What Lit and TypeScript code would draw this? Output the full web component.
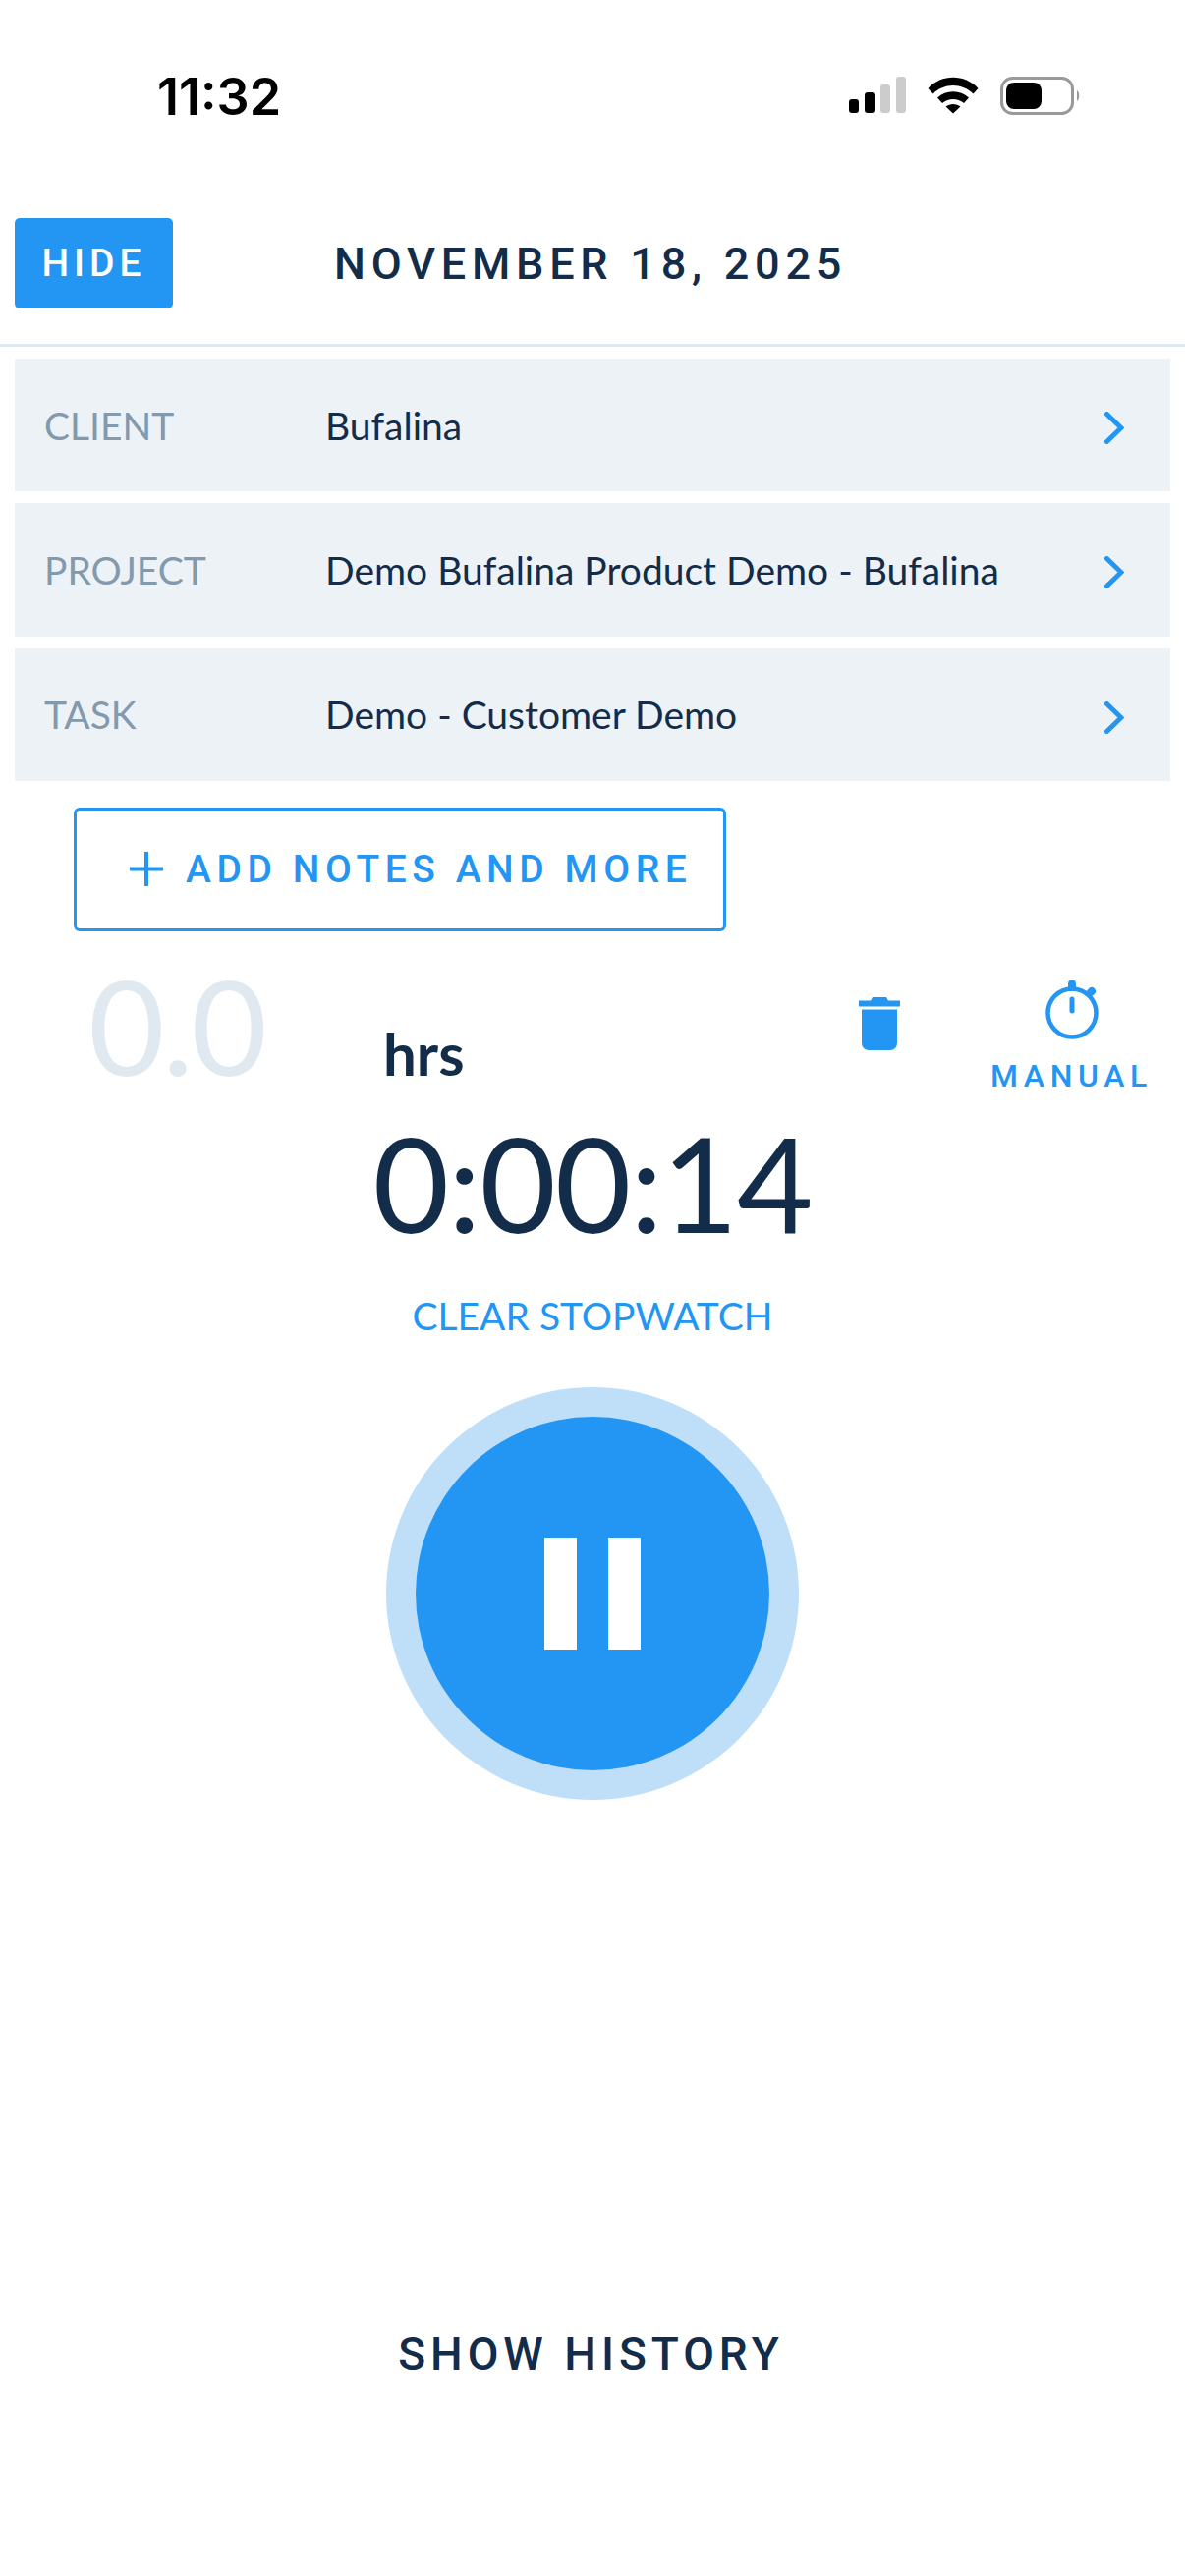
import { LitElement, html, css, svg } from "lit";
import { customElement } from "lit/decorators.js";

const rows = [
  ["CLIENT", "Bufalina"],
  ["PROJECT", "Demo Bufalina Product Demo - Bufalina"],
  ["TASK", "Demo - Customer Demo"],
];

@customElement("app-root")
export class AppRoot extends LitElement {
  static styles = css`
    :host { display: block; width: 1206px; height: 2622px; background: #fff; overflow: hidden; font-family: Lato, sans-serif; color: #132c4a; }
    .status { height: 222px; box-sizing: border-box; padding: 72px 106px 0 160px; display: flex; justify-content: space-between; align-items: flex-start; }
    .time { font: 600 52px/54px Inter, sans-serif; color: #000; letter-spacing: 0; }
    .sysicons { display: flex; align-items: flex-start; gap: 22px; padding-top: 6px; }
    .sysicons svg { display: block; }
    .head { height: 128px; border-bottom: 3px solid #e0e9f1; position: relative; }
    .hide { position: absolute; left: 15px; top: 0; width: 161px; height: 92px; background: #2396f3; border-radius: 5px; color: #fff; font: 500 39px/92px Roboto, sans-serif; letter-spacing: 5px; text-align: center; }
    .date { position: absolute; left: 340px; top: 24px; font: 500 45px/46px Roboto, sans-serif; letter-spacing: 5.75px; white-space: nowrap; }
    .rows { padding: 12px 15px 0; display: flex; flex-direction: column; gap: 12px; }
    .row { height: 135.3px; background: #edf2f6; display: flex; align-items: center; }
    .label { width: 316px; padding-left: 30px; box-sizing: border-box; font-size: 39px; color: #8299ae; }
    .value { flex: 1; font-size: 39px; color: #132c4a; }
    .chev { margin: 6px 47px 0 0; display: block; }
    .add { margin: 27px 0 0 75px; width: 664px; height: 126px; box-sizing: border-box; border: 3px solid #2396f3; border-radius: 6px; display: flex; align-items: center; padding-left: 54px; gap: 23px; color: #2396f3; font: 500 39px Roboto, sans-serif; letter-spacing: 5.55px; white-space: nowrap; }
    .add svg { display: block; flex: none; }
    .hours { height: 170px; position: relative; }
    .big { position: absolute; left: 90px; top: 16px; font-size: 134px; line-height: 160px; color: #e0e8f0; letter-spacing: -2.5px; }
    .hrs { position: absolute; left: 390px; top: 88px; font-size: 60px; line-height: 72px; font-weight: 700; }
    .trash { position: absolute; left: 874px; top: 67px; display: block; }
    .watch { position: absolute; left: 1064px; top: 50px; display: block; }
    .manual { position: absolute; left: 1008px; top: 127px; font: 500 32px/40px Roboto, sans-serif; letter-spacing: 5.6px; color: #2396f3; }
    .timer { text-align: center; font-size: 134px; line-height: 170px; margin-top: 1px; letter-spacing: -1.2px; }
    .clear { text-align: center; font-size: 39px; line-height: 50px; color: #2396f3; margin-top: 25.5px; }
    .play { margin: 47.5px auto 0; width: 420px; height: 420px; border-radius: 50%; background: #bfdff9; display: flex; align-items: center; justify-content: center; }
    .inner { width: 360px; height: 360px; border-radius: 50%; background: #2396f3; display: flex; align-items: center; justify-content: center; gap: 32px; }
    .bar { width: 33px; height: 114px; background: #fff; }
    .history { margin-top: 539px; padding-right: 3px; text-align: center; font: 500 46px/50px Roboto, sans-serif; letter-spacing: 5px; white-space: nowrap; }
  `;

  chevron() {
    return html`<svg class="chev" width="20" height="33" viewBox="0 0 20 33" fill="none"><path d="M2.5 2.5 L17 16.5 L2.5 30.5" stroke="#2396f3" stroke-width="5" stroke-linecap="round" stroke-linejoin="miter"/></svg>`;
  }

  render() {
    return html`
      <div class="status">
        <div class="time">11:32</div>
        <div class="sysicons">
          <svg width="58" height="38" viewBox="0 0 58 38" fill="#000">
            <rect x="0" y="23" width="10" height="14" rx="3"/>
            <rect x="16" y="16" width="10" height="21" rx="3"/>
            <rect x="32" y="8" width="10" height="29" rx="3" fill="#ccc"/>
            <rect x="48" y="0" width="10" height="37" rx="3" fill="#ccc"/>
          </svg>
          <svg width="52" height="38" viewBox="0 0 52 38" fill="#000">
            ${svg`<path d="M0.5 12 C14 -3 38 -3 51.5 12 L46.5 17.5 C35 6 17 6 5.5 17.5 Z"/>
            <path d="M10 21.5 C19 13 33 13 42 21.5 L37 27 C30.5 21.5 21.5 21.5 15 27 Z"/>
            <path d="M18.5 30.5 C23 27 29 27 33.5 30.5 L26 37.5 Z"/>`}
          </svg>
          <svg width="82" height="40" viewBox="0 0 82 40">
            <rect x="1.5" y="1.5" width="72" height="36" rx="11" fill="none" stroke="#999" stroke-width="3"/>
            <rect x="6" y="6" width="36" height="27" rx="8" fill="#000"/>
            <path d="M78 14 C81 16 81 23 78 25 Z" fill="#999"/>
          </svg>
        </div>
      </div>
      <div class="head">
        <div class="hide">HIDE</div>
        <div class="date">NOVEMBER 18, 2025</div>
      </div>
      <div class="rows">
        ${rows.map(
          ([l, v]) => html`<div class="row"><div class="label">${l}</div><div class="value">${v}</div>${this.chevron()}</div>`
        )}
      </div>
      <div class="add">
        <svg width="34" height="35" viewBox="0 0 34 35"><path d="M0 17.5 H34 M17 0 V35" stroke="#2396f3" stroke-width="4"/></svg>
        <span>ADD NOTES AND MORE</span>
      </div>
      <div class="hours">
        <div class="big">0.0</div>
        <div class="hrs">hrs</div>
        <svg class="trash" width="42" height="54" viewBox="0 0 42 54" fill="#2396f3">
          <path d="M0 3.5 H12 L14 0 H28 L30 3.5 H42 V9.5 H0 Z"/>
          <path d="M3 12.5 H39 V47 A7 7 0 0 1 32 54 H10 A7 7 0 0 1 3 47 Z"/>
        </svg>
        <svg class="watch" width="54" height="60" viewBox="0 0 54 60" fill="none" stroke="#2396f3">
          <circle cx="27" cy="33" r="24.5" stroke-width="4.5"/>
          <path d="M27 3.5 V7" stroke-width="8" stroke-linecap="round"/>
          <path d="M46 12 L47 11" stroke-width="8" stroke-linecap="round"/>
          <path d="M27 19 V31" stroke-width="5" stroke-linecap="round"/>
        </svg>
        <div class="manual">MANUAL</div>
      </div>
      <div class="timer">0:00:14</div>
      <div class="clear">CLEAR STOPWATCH</div>
      <div class="play"><div class="inner"><div class="bar"></div><div class="bar"></div></div></div>
      <div class="history">SHOW HISTORY</div>
    `;
  }
}
